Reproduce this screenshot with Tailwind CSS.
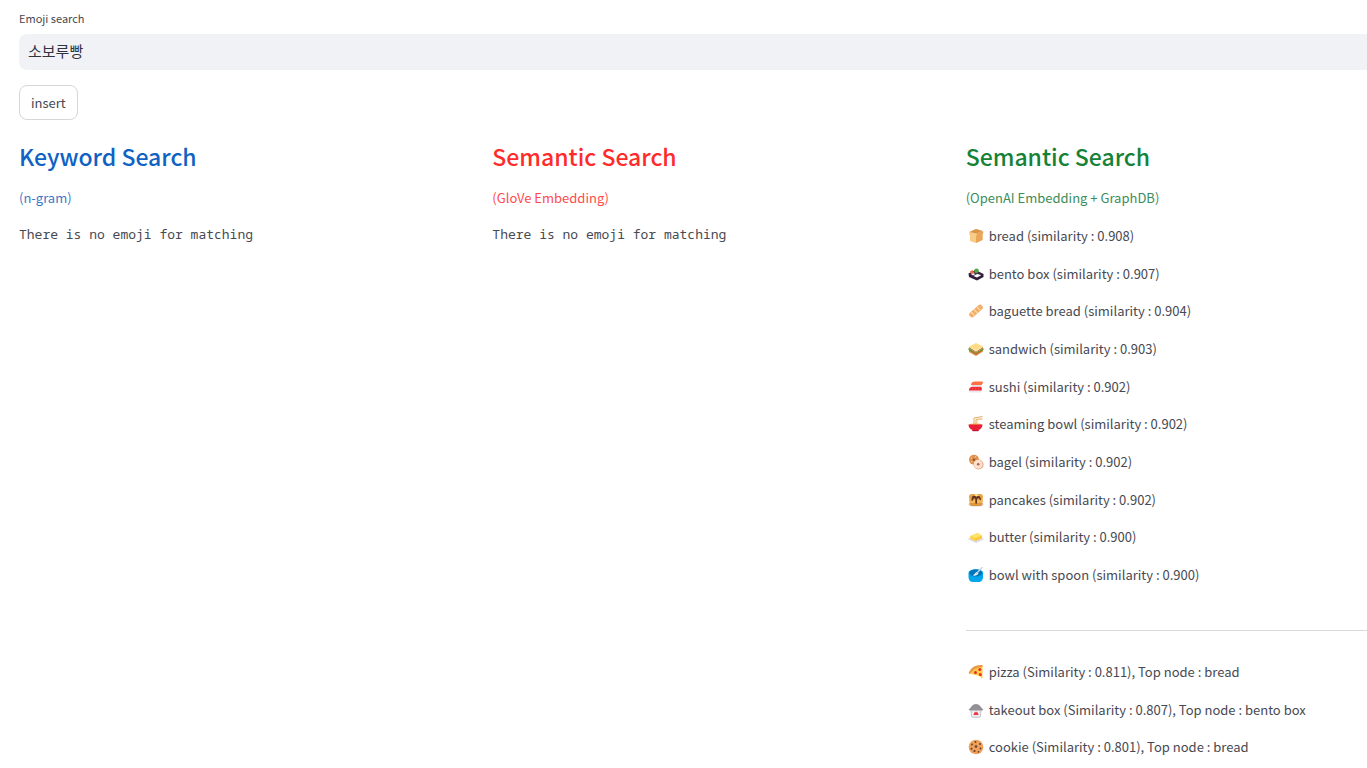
<!DOCTYPE html>
<html lang="en">
<head>
<meta charset="utf-8">
<meta name="viewport" content="width=device-width, initial-scale=1">
<title>Emoji search</title>
<script src="https://cdn.jsdelivr.net/npm/@tailwindcss/browser@4"></script>
</head>
<body class="min-h-screen overflow-x-hidden bg-white font-['Noto_Sans_CJK_KR',sans-serif] text-[13px] leading-6 text-[#474952]">
<main class="pl-[19px] pt-2">
  <form onsubmit="return false">
    <label for="q" class="block text-[11px] leading-5">Emoji search</label>
    <input id="q" type="text" value="소보루빵" class="mt-[6px] block h-9 w-full rounded-l-lg bg-[#f0f2f6] px-[9px] pb-1 text-[15px] text-[#31333f] outline-none">
    <button type="submit" class="mt-[15px] block h-[35px] rounded-lg border border-[#d6d6d9] bg-white px-[11px] text-[13px] leading-6">insert</button>
  </form>
  <div class="mt-[19px] grid grid-cols-[473fr_473fr_401fr]">
    <section>
      <h2 class="text-[23px] font-medium leading-[34px] text-[#0f62c4]">Keyword Search</h2>
      <p class="mt-[13px] text-[#3d78c8]">(n-gram)</p>
      <p class="mt-3 font-['Noto_Sans_Mono','Liberation_Mono',monospace]">There is no emoji for matching</p>
    </section>
    <section>
      <h2 class="text-[23px] font-medium leading-[34px] text-[#ff2b2b]">Semantic Search</h2>
      <p class="mt-[13px] text-[#ff4b4b]">(GloVe Embedding)</p>
      <p class="mt-3 font-['Noto_Sans_Mono','Liberation_Mono',monospace]">There is no emoji for matching</p>
    </section>
    <section class="whitespace-nowrap">
      <h2 class="text-[23px] font-medium leading-[34px] text-[#158237]">Semantic Search</h2>
      <p class="mt-[13px] text-[#3c8d5a]">(OpenAI Embedding + GraphDB)</p>
      <ul class="mt-[14px] flex h-[363px] flex-col justify-between pl-[2px]">
        <li class="flex items-center gap-[5px]"><svg class="size-4" viewBox="0 0 16 16"><path d="M1.500 4 8 1l6.500 2c1.200 1 .8 2.400 0 3v6L8 15l-6-2V7C.8 6.500.7 4.800 1.500 4Z" fill="#f8cc87"/><path d="M1.500 4 8 1l6.500 2-6 2.500Z" fill="#d99547"/><path d="m8.500 5.500 6-2.500c1.200 1 .8 2.400 0 3v6L8 15V8c1-.5 1.200-1.700.5-2.500Z" fill="#e9a65b"/></svg>bread (similarity : 0.908)</li>
        <li class="flex items-center gap-[5px]"><svg class="size-4" viewBox="0 0 16 16"><path d="m.5 7.500 7-3.500 8 4v3L9 14.500 1 11Z" fill="#311d3b"/><path d="m2 8 5-2.500L14 8.500 9 11Z" fill="#513457"/><path d="m5.500 10 3.700-2 4 1.200L9 11.500Z" fill="#fff"/><path d="M2 5.500 4.500 4l2 3-3 1.500Z" fill="#f66a34"/><circle cx="8.500" cy="4.800" r="2.300" fill="#4aa846"/><path d="m3 8 3-.8 1 1.300-2 1Z" fill="#eee9f1"/></svg>bento box (similarity : 0.907)</li>
        <li class="flex items-center gap-[5px]"><svg class="size-4" viewBox="0 0 16 16"><path d="M4 11.500 12 4.500" stroke="#f4ad68" stroke-width="5.500" stroke-linecap="round"/><path d="m3.500 9.500 2.300 2.300M6.500 7l2.300 2.300m.7-4.800 2.300 2.300" stroke="#ffe1b5" stroke-width="1.200" stroke-linecap="round"/></svg>baguette bread (similarity : 0.904)</li>
        <li class="flex items-center gap-[5px]"><svg class="size-4" viewBox="0 0 16 16"><path d="m1 8 7 4 7-4v2.500L8 15l-7-4Z" fill="#d98c43"/><path d="m.5 7 7.500 4.500L15.500 7v2L8 13.500.5 9Z" fill="#52a332"/><path d="m3 9.500 5 3 5-3v1l-5 3-5-3Z" fill="#e95a32"/><path d="m1 6 7 4.500L15 6v1.500l-7 4-7-4Z" fill="#bd813e"/><path d="M1 5.500 8 2l7 3.500-7 4.500Z" fill="#ffdc85"/></svg>sandwich (similarity : 0.903)</li>
        <li class="flex items-center gap-[5px]"><svg class="size-4" viewBox="0 0 16 16"><path d="M3.500 6H14v1.500H4Z" fill="#e5e2e8"/><path d="M3 6c.3-2.500 1.500-3.500 4-3.500h7c1.300 0 1.300 1.200.6 2L13.500 6Z" fill="#ff7044"/><path d="M1 11.500h12.500v1c0 .7-.5 1-1 1H2c-.6 0-1-.4-1-1Z" fill="#ebe7ee"/><path d="M.8 11.500c.3-2.500 1.700-3.700 3.700-3.700H12c1.800 0 2.300 1.500 1.500 3.700Z" fill="#ed2a33"/><path d="m5 8.200-.7 2.600m3.700-2.600-.7 2.600m3.700-2.600-.7 2.600" stroke="#ff594d" stroke-width=".7"/></svg>sushi (similarity : 0.902)</li>
        <li class="flex items-center gap-[5px]"><svg class="size-4" viewBox="0 0 16 16"><path d="M6 8V2l8.500-1.500M8 8V3.500l6.500-.7" fill="none" stroke="#dfaa65" stroke-width="1"/><path d="M9 7V2.500" stroke="#f5ce7c" stroke-width="1"/><ellipse cx="7.500" cy="8.500" rx="6.500" ry="1.200" fill="#f8b566"/><path d="M.5 8.500h14c0 3-1.700 4.700-4 5.500v1h-6v-1c-2.400-.8-4-2.500-4-5.500Z" fill="#e91f35"/><path d="M4.500 14h6v1.200h-6Z" fill="#bc1434"/></svg>steaming bowl (similarity : 0.902)</li>
        <li class="flex items-center gap-[5px]"><svg class="size-4" viewBox="0 0 16 16"><circle cx="6" cy="5.700" r="5" fill="#df9250"/><circle cx="6" cy="5.700" r="1.300" fill="#9a5532"/><g fill="#ffdfac"><circle cx="3.500" cy="4" r=".6"/><circle cx="7.500" cy="2.800" r=".6"/><circle cx="3.700" cy="7.500" r=".6"/></g><circle cx="10.500" cy="10.500" r="5" fill="#dc9c70"/><circle cx="10.200" cy="10.200" r="4.500" fill="#ffe0cc"/><circle cx="10.200" cy="10.200" r="1.300" fill="#aa6552"/></svg>bagel (similarity : 0.902)</li>
        <li class="flex items-center gap-[5px]"><svg class="size-4" viewBox="0 0 16 16"><ellipse cx="8" cy="12.500" rx="7.800" ry="2.500" fill="#e4dfe5"/><rect x="1.500" y="9" width="13" height="5" rx="2.500" fill="#dc963d"/><rect x="1" y="6" width="14" height="5" rx="2.500" fill="#f3b759"/><rect x="1" y="2" width="14" height="6" rx="3" fill="#e8a246"/><path d="M4 4.500c2-1.500 6-1.500 8 0l1 3c0 1-1.300 1-1.300 0L10.500 6 9 7v4c0 1-1.700 1-1.700 0V7L6 6 4.700 8.500c-.5.800-1.500.4-1.200-.5Z" fill="#633421"/><path d="m6 3 2-1 3 1-2.500 1.800Z" fill="#ffe98b"/></svg>pancakes (similarity : 0.902)</li>
        <li class="flex items-center gap-[5px]"><svg class="size-4" viewBox="0 0 16 16"><path d="m.5 9.500 8-3.500 7 3.500v1L8 14 .5 10.500Z" fill="#dedbe3"/><path d="m2.500 7 7-3 4.500 2.500V9l-6.500 3-5-2.500Z" fill="#ffc62e"/><path d="m2.500 7 7-3L14 6.500 7.500 9.300Z" fill="#ffe46d"/><path d="m2.500 7 5 2.300V12l-5-2.500Z" fill="#ffd344"/></svg>butter (similarity : 0.900)</li>
        <li class="flex items-center gap-[5px]"><svg class="size-4" viewBox="0 0 16 16"><path d="M.5 6c0-5 14.500-5 14.500 0v4c0 3-2 5-4.500 5H5c-2.700 0-4.500-2-4.500-5Z" fill="#00a6ed"/><ellipse cx="7.800" cy="6" rx="6.500" ry="3.500" fill="#0074b9"/><path d="m5 8.500 3.300-3.500 2.200 1.300c-1 2.200-3.500 3-5.500 2.200Z" fill="#e6edf2"/><path d="m8.500 6.500 5.500-6" stroke="#c7d3dc" stroke-width="1.400" stroke-linecap="round"/></svg>bowl with spoon (similarity : 0.900)</li>
      </ul>
      <hr class="mt-[43px] border-t border-[#d9d9dc]">
      <ul class="mt-[29px] flex h-[99px] flex-col justify-between pl-[2px]">
        <li class="flex items-center gap-[5px]"><svg class="size-4" viewBox="0 0 16 16"><path d="M.8 9C3 4 8 1 14 1l.5 1.500V13c0 2-1.500 2-1.500.5L11.500 12 3 10Z" fill="#ffce43"/><path d="M.8 9C2 4 8 .2 14 1c1 .3 1 2 0 2C8.500 3.500 5 6 2.500 9.300 2 10.100.5 10 .8 9Z" fill="#e99a4b"/><g fill="#ea2c32"><circle cx="11.800" cy="5.500" r="1.500"/><circle cx="7.500" cy="8.500" r="1.500"/><circle cx="12.300" cy="10.500" r="1.500"/></g></svg>pizza (Similarity : 0.811), Top node : bread</li>
        <li class="flex items-center gap-[5px]"><svg class="size-4" viewBox="0 0 16 16"><path d="M2.500 7.500h11l-1 7c-.1.700-.5 1-1 1h-7c-.6 0-1-.4-1.100-1Z" fill="#eeeaf1"/><path d="m2.800 8 .8 6.500c.1.500.4.800.9.800h7c.5 0 .8-.3.900-.8l.8-6.500" fill="none" stroke="#b8b2bd" stroke-width=".7"/><path d="M.5 8 3.500 4.500C5 1 11 1 12.500 4.500L15.500 8l-2 .5h-11Z" fill="#939195"/><path d="M6 10.500h1l1-1 1 1h1V12l.8 1H5.200l.8-1Z" fill="#f23744"/></svg>takeout box (Similarity : 0.807), Top node : bento box</li>
        <li class="flex items-center gap-[5px]"><svg class="size-4" viewBox="0 0 16 16"><circle cx="8" cy="8" r="7.300" fill="#eda25b"/><g fill="#6d3c2c"><circle cx="7.500" cy="3" r=".9"/><circle cx="12" cy="5" r="1"/><circle cx="4" cy="5.500" r=".9"/><circle cx="8" cy="7.500" r="1.300"/><circle cx="3.500" cy="9.800" r="1"/><circle cx="12.500" cy="9.500" r=".9"/><circle cx="10.500" cy="12.800" r=".9"/><circle cx="6.500" cy="12" r="1.100"/></g></svg>cookie (Similarity : 0.801), Top node : bread</li>
      </ul>
    </section>
  </div>
</main>
</body>
</html>
